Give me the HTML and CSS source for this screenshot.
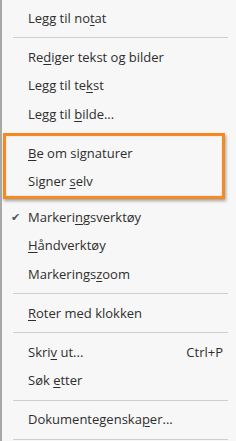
FILE: index.html
```html
<!DOCTYPE html>
<html lang="nb">
<head>
  <meta charset="UTF-8">
  <title>Kontekstmeny</title>
<link rel="stylesheet" href="styles.css">
</head>
<body>
  <div class="menu">
    <div class="item">Legg til no<u>t</u>at</div>
    <div class="sep"></div>
    <div class="item">Re<u>d</u>iger tekst og bilder</div>
    <div class="item">Legg til te<u>k</u>st</div>
    <div class="item">Legg til <u>b</u>ilde...</div>
    <div class="highlight">
      <div class="item"><u>B</u>e om signaturer</div>
      <div class="item">Signer <u>s</u>elv</div>
    </div>
    <div class="item"><span class="check">&#10004;</span>Markeri<u>n</u>gsverktøy</div>
    <div class="item"><u>H</u>åndverktøy</div>
    <div class="item">Markerings<u>z</u>oom</div>
    <div class="sep"></div>
    <div class="item"><u>R</u>oter med klokken</div>
    <div class="sep"></div>
    <div class="item"><span class="key">Ctrl+P</span>Skri<u>v</u> ut...</div>
    <div class="item">Søk <u>e</u>tter</div>
    <div class="sep"></div>
    <div class="item">Dokumentegenska<u>p</u>er...</div>
    <div class="sep"></div>
  </div>
</body>
</html>
```
FILE: styles.css
```css
body {
  margin: 0;
  background: #f7f7f7;
}

.menu {
  width: 236px;
  height: 441px;
  box-sizing: border-box;
  border-left: 2px solid #a8a8a8;
  background: #f7f7f7;
  padding-top: 3.75px;
  font-family: 'Open Sans', sans-serif;
  font-size: 13px;
  color: #2e2e2e;
  overflow: hidden;
}

.item {
  height: 28.5px;
  line-height: 28.5px;
  padding-left: 26px;
  padding-right: 13px;
  position: relative;
  white-space: nowrap;
}

.item u {
  text-decoration-thickness: 1px;
  text-underline-offset: 2px;
}

.key {
  float: right;
}

.check {
  position: absolute;
  left: 9px;
  font-size: 11px;
  color: #555;
}

.sep {
  height: 1px;
  background: #cfcfcf;
  margin: 5px 8px 4.5px 11px;
}

.highlight {
  margin: 4.75px 11px 4px 1px;
  padding: 2.5px 0 0 0;
  border: 3px solid #f58a1f;
  box-shadow: 1px 2px 3px rgba(0, 0, 0, 0.35), inset 0 0 2px rgba(0, 0, 0, 0.15);
}

.highlight .item {
  padding-left: 22px;
  padding-right: 0;
}
```
